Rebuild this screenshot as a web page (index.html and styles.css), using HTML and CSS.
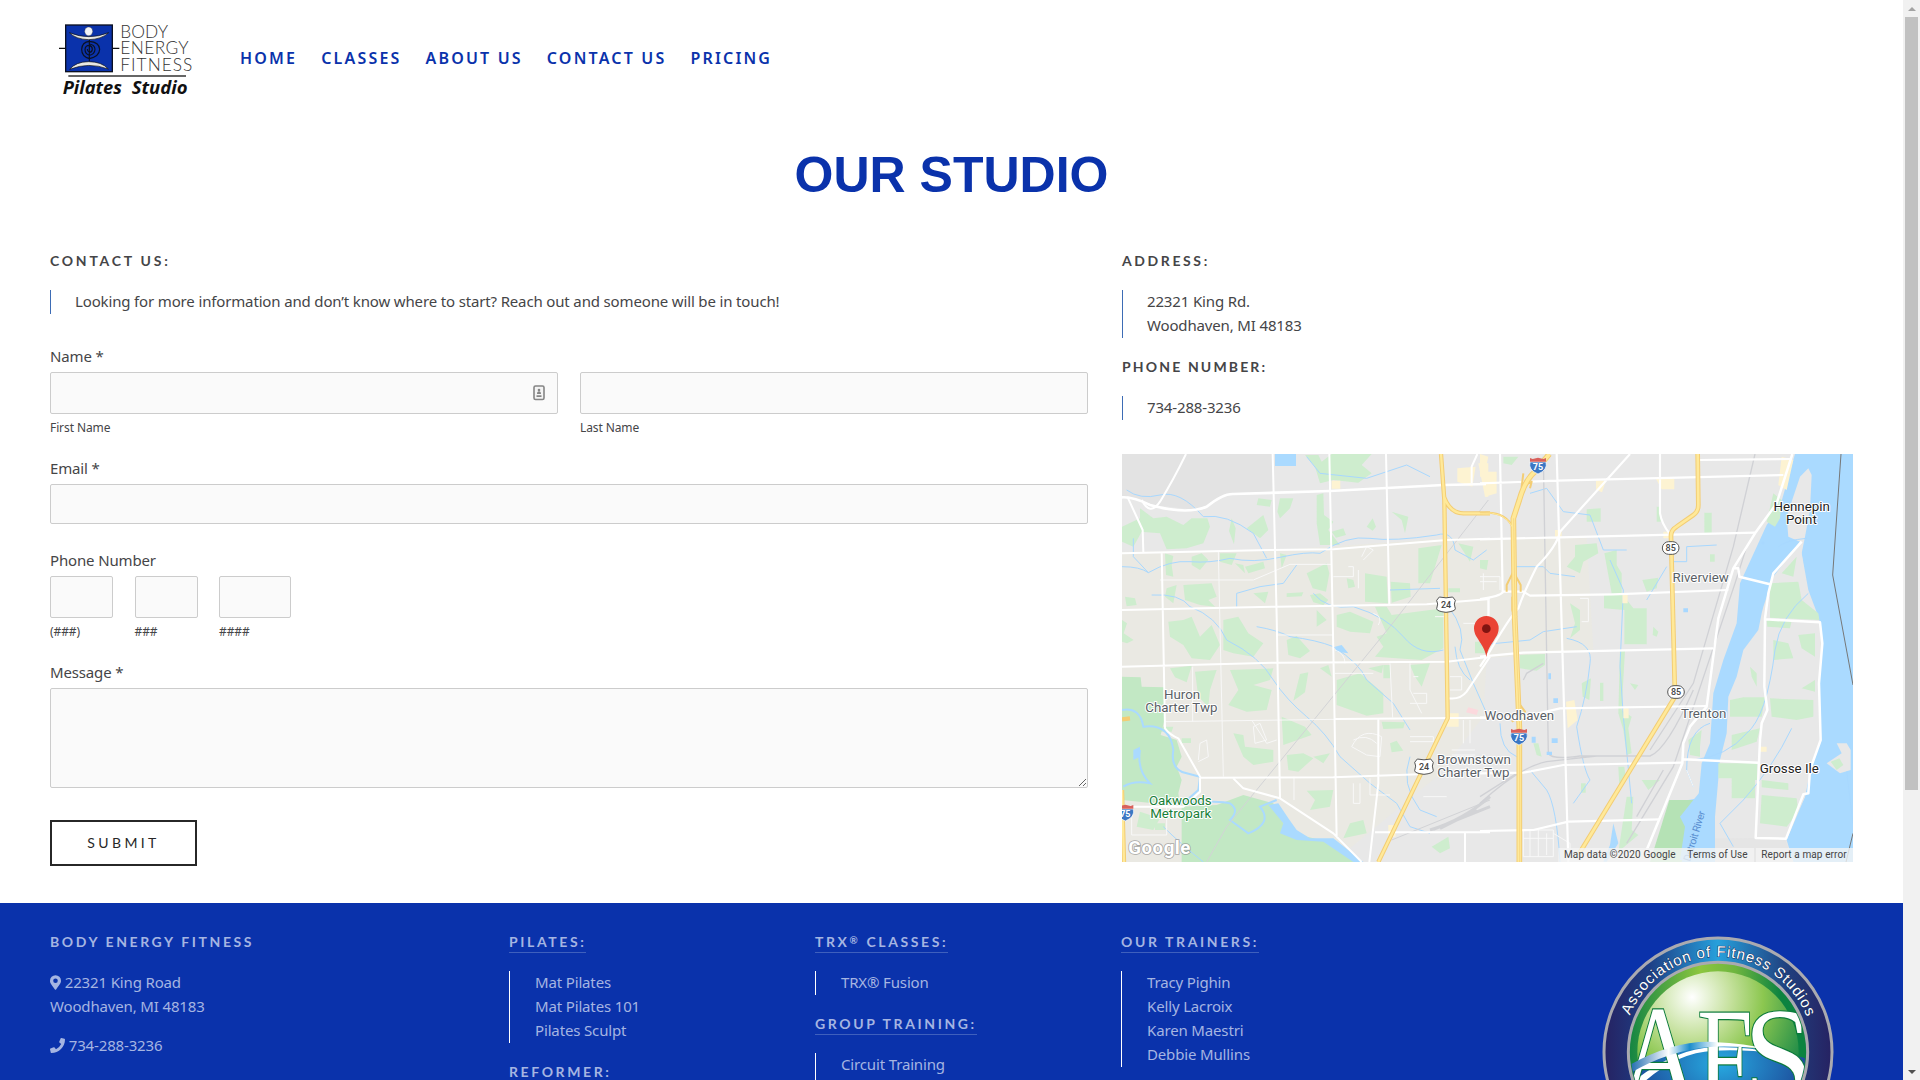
FILE: index.html
```html
<!DOCTYPE html>
<html lang="en">
<head>
<meta charset="utf-8">
<title>Our Studio</title>
<link rel="stylesheet" href="styles.css">
</head>
<body>
<div class="page">
  <header class="header">
    <svg class="logo" viewBox="0 0 540 300">
      <path d="M57 115H77M218 115H238" stroke="#111" stroke-width="4"/>
      <rect x="77" y="45" width="140" height="140" fill="#0a32ab" stroke="#0b1022" stroke-width="4"/>
      <ellipse cx="146" cy="64" rx="12" ry="13" fill="#f1f3f7" stroke="#222" stroke-width="1"/>
      <path d="M88 68Q146 92 206 68Q185 88 146 89Q108 88 88 68Z" fill="#e8e8e4" stroke="#111" stroke-width="2"/>
      <path d="M89 178Q108 155 146 155Q185 155 205 177Q146 155 89 178Z" fill="#e8e8e4" stroke="#111" stroke-width="2"/>
      <path d="M148 90V154M148 94Q178 96 179 118Q178 140 148 146Q125 140 125 118Q126 96 148 94M148 102Q164 104 165 118Q164 134 148 136Q135 132 135 118Q136 106 148 106Q157 108 157 118Q156 127 148 127Q142 124 142 117" fill="none" stroke="#0b1022" stroke-width="3.5"/>
      <g class="logo-name">
        <text x="241" y="83" textLength="143">BODY</text>
        <text x="241" y="133" textLength="205">ENERGY</text>
        <text x="241" y="184" textLength="216">FITNESS</text>
      </g>
      <path d="M85 198H438" stroke="#333" stroke-width="4"/>
      <text class="logo-sub" x="68" y="251" textLength="178" lengthAdjust="spacingAndGlyphs">Pilates</text>
      <text class="logo-sub" x="275" y="251" textLength="168" lengthAdjust="spacingAndGlyphs">Studio</text>
    </svg>
    <nav class="nav"><a>HOME</a><a>CLASSES</a><a>ABOUT US</a><a>CONTACT US</a><a>PRICING</a></nav>
  </header>

  <h1 class="title">OUR STUDIO</h1>

  <main class="main">
    <section class="contact">
      <h3>CONTACT US:</h3>
      <blockquote>Looking for more information and don’t know where to start? Reach out and someone will be in touch!</blockquote>
      <form class="form">
        <label>Name *</label>
        <div class="row">
          <div class="cell grow">
            <div class="input with-icon">
              <svg width="12" height="16" viewBox="0 0 12 16"><rect x="1" y="1" width="10" height="13.5" rx="1.5" fill="#f4f4f4" stroke="#858585" stroke-width="1.6"/><circle cx="6" cy="5" r="1.3" fill="#858585"/><path d="M4 9q0-2.800 2-2.800t2 2.800zM3.500 10.300h5v1.600h-5z" fill="#858585"/></svg>
            </div>
            <small>First Name</small>
          </div>
          <div class="cell grow"><div class="input"></div><small>Last Name</small></div>
        </div>
        <label class="after-caption">Email *</label>
        <div class="input short"></div>
        <label class="after-input">Phone Number</label>
        <div class="row phone">
          <div class="cell"><div class="input"></div><small>(###)</small></div>
          <div class="cell"><div class="input"></div><small>###</small></div>
          <div class="cell wide"><div class="input"></div><small>####</small></div>
        </div>
        <label class="after-caption">Message *</label>
        <textarea class="input area"></textarea>
        <button class="submit" type="button">SUBMIT</button>
      </form>
    </section>

    <section class="location">
      <h3>ADDRESS:</h3>
      <blockquote>22321 King Rd.<br>Woodhaven, MI 48183</blockquote>
      <h3 class="second">PHONE NUMBER:</h3>
      <blockquote>734-288-3236</blockquote>
      <div class="map">
        <svg viewBox="6 12 2193 1224" preserveAspectRatio="none">
          <rect x="6" y="12" width="2193" height="1224" fill="#e8e8e8"/>
          <path d="M6 305L480 300L980 265L1400 262L1420 600L1100 625L1090 800L950 980L640 1236H6Z" fill="#eae9e3"/>
          <path d="M6 12H460V125L330 130L230 180L100 165L6 140Z" fill="#e3e3e3"/>

          <g fill="#ceedce">
            <path d="M60 175L100 205L140 200L190 225L215 205L262 205L270 230L250 280L200 295L140 298L120 250L60 245Z"/>
            <path d="M6 230L60 205L68 240L40 290L6 275ZM415 145L455 150L450 170L410 165ZM480 145L520 145L510 175L480 205L472 185ZM590 135L610 130L612 195L640 215L625 240L660 285L600 285L590 220Z"/>
            <path d="M635 12H755L725 45L755 70L715 98L640 90L600 100L585 50L555 15H595L605 35ZM815 185L865 200L855 250L845 210ZM740 230l18-25 10 25-10 12zM635 245l35-10 8 20-30 8zM380 235l50-40 15 45-25 25zM335 205l12 30-5 48-15-40z"/>
            <path d="M135 310L160 318L155 345L160 380L138 375ZM215 320l30-10 20 20-25 30-25-15zM300 310h50l-15 35-35-10zM375 350l55-15 5 20-50 15zM345 340l25 5 5 25zM560 370l60-30 8 30-10 55-40-10zM480 310l20 5-15 40zM190 405L275 400L290 440L265 450L285 470L240 465L195 450ZM140 415l30-10-10 55-25-20zM400 430l45-5-10 35zM500 430l50-3-5 12-45 2zM15 440l30 5 5 20-30 4zM570 435l30-5 25 20-15 15-30-8z"/>
            <path d="M145 515L190 510L215 500L240 560L275 525L300 585L270 630L215 625L190 585L150 560ZM310 510L355 500L385 550L430 580L400 620L340 610L310 600ZM500 570l30-12 40 45-30 22-35-10zM6 510l15 10-10 30 30 20-20 10-15-5zM590 480l30 30-30 20z"/>
            <path d="M735 370L800 380L804 460L735 455ZM812 395L870 400L872 440L815 458ZM895 295L965 285L930 400L895 400ZM680 385l20 5 5 20-20 5zM765 470L800 470L815 495L970 475V595L905 630L765 620L790 590L770 560L800 550ZM650 495L690 485L760 515L750 550L690 545L650 530Z"/>
            <path d="M330 660L460 655L450 690L400 705L455 720L440 780L380 785L325 765L355 720ZM225 665L290 660L270 720L265 770L235 740ZM150 655l65-8-15 50-35-15zM540 672l25-5-10 60-35 25zM650 690L720 670L790 730V790L740 797L650 765ZM870 645l60-5-25 70-20-30zM600 655l25-10 10 35z"/>
            <path d="M485 800L555 830L575 855L490 885ZM340 850L370 855L375 890L460 900V935L400 945L370 920ZM500 915l50-5 30 15-45 40-30-5zM785 815l70 2-5 18-60 2zM560 1022l80-2-10 50-60 10 15-30zM690 1120l40-10 10 40-70 15zM935 1190l50-30 5 35-30 15zM790 645h20v40h-20zM580 920l50-10-20 30zM60 1085l60 20-20 35-50-10z"/>
            <path d="M105 1120h30v20h-30zM120 830h40l-5 15h-35zM185 865h28v14h-28zM810 880l20-8 20 30-35 5zM745 655l45-10-5 25zM1015 280l45 10-10 45zM985 415h35v12h-35zM1065 575h40v35h-40z"/>
          </g>
          <path d="M6 680L62 682L65 710L132 712V815L122 855L170 870L185 920L170 950L185 990L175 1030L180 1060H100L6 1050ZM185 1070L290 1065L370 1035L460 1060L490 1120L560 1160L650 1180L720 1236H185Z" fill="#c2e8c4"/>
          <path d="M465 12H528V48H465Z" fill="#aadaff"/>
          <g fill="none" stroke="#a8d8ff" stroke-width="3">
            <path d="M20 120Q60 150 120 135T250 200Q320 190 400 250L440 325M6 350Q60 350 85 368Q150 330 210 335T330 325Q400 340 480 322T600 310Q680 255 750 265T950 255Q1000 240 1005 300L1060 330L1100 300M95 435Q180 430 210 470Q290 500 320 570Q420 620 460 690Q500 750 560 800T660 920L750 1000L830 1060L870 1130L930 1150M410 530Q470 540 510 560Q590 570 640 590Q720 640 740 690L820 760L870 840M580 430Q620 480 700 470Q800 500 850 560Q900 620 970 600M560 20L600 70L740 85L860 45L930 80M985 470Q1040 540 1020 600L1060 700L1100 790M350 470V430L420 410L490 400L530 345"/>
            <path d="M130 1130Q180 1180 250 1236M40 265L40 320L85 368M810 420L960 415M870 920Q840 1000 900 1080L950 1100M1005 590Q1010 660 1050 690"/>
          </g>
          <path d="M6 780Q60 770 70 830Q150 820 160 900Q150 960 200 970L240 980M10 1010Q40 990 90 1000Q50 960 60 900M240 980L235 1020L190 1060Q300 1050 330 1060Q360 1080 330 1110L385 1150Q460 1120 420 1070L470 1050" fill="none" stroke="#aadaff" stroke-width="6"/>
          <path d="M445 1065L475 1060L505 1105L530 1140L570 1165L640 1165L730 1236H700L610 1175L530 1170L480 1150L490 1120ZM40 900l20-10 0 30-20 10zM645 590l20-5 20 25-35-5z" fill="#aadaff"/>
          <path d="M1105 150L810 530L320 1130L260 1236M815 1170L1110 1050" fill="none" stroke="#d2d3d6" stroke-width="3"/>
          <path d="M930 1140Q1030 1110 1110 1040M940 1138L1110 1070M960 1135L1070 1080" fill="none" stroke="#d2d3d6" stroke-width="9"/>
          <g fill="#fdf3d2"><path d="M635 92h26v24h-26zM1012 55l55-5-10 60-45-15zM1075 40h30v100h-10z"/><path d="M980 790h36v40h-36zM805 1125h22v35h-22z"/></g>
          <path d="M1045 772l30 8-5 15-32-8z" fill="#fbd9dd"/>

          <g fill="none" stroke="#f8f8f8" stroke-width="3">
            <path d="M120 390H400L510 343H635M295 305L310 980M470 555H636M218 650V815M810 640L818 803M135 815L645 808M645 670H760M522 980V1050M395 810L440 880L470 870M400 830l20-10 20 50-35 10zM235 930l5-50 20-10 5 50-30 15M640 380h60v-30h-15M715 415V360M730 330l30-30-20-10-15 30M945 500h40M1030 520h50v40M990 680h35v40h-35M870 640V720L905 790M880 680h15M870 760h50v-30h-40M695 890q30-60 90-30l-5 60-40-5zM700 870q40-20 70 10M645 600q30 10 30 40M700 1000v60h20v-60M750 985v50h60M870 860h70v15h-70M1030 810v70M1050 810v70M995 900h70M995 915h70M910 1040h70M35 1070v85H140V1070M760 490q30 10 15 35"/>
          </g>
          <g fill="none" stroke="#fff" stroke-width="6" stroke-linejoin="round">
            <path d="M458 12L470 500L480 1045M628 12L640 600L650 1165M798 12L808 463M6 310L450 300L640 298L980 270L1110 266M6 480L470 470L920 463L1110 447M6 650L470 638L980 635L1110 620M645 807L1110 803M240 983L640 982L900 973M125 305L135 835Q150 855 175 865L242 983M775 808V1000L748 1236M765 1147H1110M1035 1147V1236M340 985L370 1015L480 1045L640 1150L725 1236M22 140L68 240L70 305M198 12Q160 90 120 155Q90 200 65 150M1110 620L1040 725Q1020 750 985 745M1072 12L1055 50V100M10 1070H190L240 1025V983M1105 450V530"/>
            <path d="M6 142Q40 140 90 165Q200 195 260 170Q310 130 340 132L630 123L970 105L1110 102" stroke-width="8"/>
          </g>
          <g fill="none" stroke="#f3cd74" stroke-width="13">
            <path d="M963 12L973 150L983 805L775 1236M972 140Q990 190 1030 190L1110 190M6 1020L12 1236M6 808L30 805"/>
          </g>
          <path d="M963 12L973 150L983 805L775 1236M972 140Q990 190 1030 190L1110 190M6 1020L12 1236" fill="none" stroke="#ffe999" stroke-width="7"/>

          <g transform="translate(1080 0)">
            <path d="M945 12H1119V1236H940L920 1170L975 1040L1000 900L1020 850L1015 690L1028 580L1015 500L985 420L965 310L975 260L990 180L995 75L985 55L960 80L920 200L925 260L960 275L880 380L850 470L845 490L835 540L790 600L770 680L745 740L740 850L720 930L705 1100L695 1236H605L625 1050L655 1045L665 940L690 880L700 730L730 630L770 520L780 400L860 225L900 170Z" fill="#aadaff"/>
            <path d="M880 390L960 275L980 420L1020 515L1028 580L1018 700L1020 870L990 960L975 1040L915 1166L827 1164L835 830L860 780L855 470Z" fill="#e8e8e8"/>
            <path d="M750 1165L827 1164L915 1166L940 1236H700L705 1165Z" fill="#e5e5e5"/>
            <path d="M1040 940L1085 910L1070 880L1100 880L1112 900V960L1080 970Z" fill="#e8e8e8"/>
            <g fill="#ceedce">
              <path d="M320 178L362 175V215H320ZM285 285L350 280L355 310L310 335L300 370L260 350L285 320ZM373 310L410 300V345L425 370V430L460 475H500V583H433V480L372 475V435L395 430ZM487 390L535 383L530 415L500 425ZM673 188H695V248H673ZM690 313h14v22h-14zM120 615L195 612V645L170 662L120 655ZM270 460L300 480L300 540L270 565L285 520ZM880 130L905 150L900 205L885 230L860 215Z"/>
              <path d="M750 750L790 742H855L845 800H750ZM870 400L955 395L965 450L1015 490L1018 510L870 503ZM860 510L935 512L930 535L862 530ZM880 570L925 580L940 625L880 630ZM955 555l50-5 0 70-40-25zM870 745L1000 750V800L950 810L875 800ZM845 1035L950 1045L955 1085L920 1130L840 1120ZM845 990L925 1000V1020L845 1012ZM905 370l45-50-10 60zM965 715l40-25v35z"/>
              <path d="M420 600H435L425 780L455 800L445 835L455 910L440 915L430 840L415 790ZM415 950h18l5 40-20 20zM305 700l28-15-5 65-20-10zM755 855l85-20-10 40-75 25zM625 870l40-30-5 50 0 30-30-5zM715 940H832V990H825V1045H755V985H715ZM520 530l15 15-5 15-12-5zM160 880l15 0 10 40-15-5zM70 20l45 0-20 25-25-5zM303 1000h14v28h-14zM485 990l55 0-35 30zM440 1040l20 0-5 100 20 15-60 50zM810 650l20 20 0 40-15-30zM530 170h12v45h-12zM0 330l25 0-5 30-20-5zM360 698h10v55h-10zM450 700l25 5-10 15z"/>
            </g>
            <path d="M568 1050H655L640 1120L605 1236H510Z" fill="#b5e2b5"/>
            <path d="M1052 935L1078 925L1090 945L1070 960Z" fill="#ceedce"/>
            <path d="M600 1230L615 1130L600 1100L640 1050L665 1020L705 1030V1236ZM400 1120l15 60-35 55h-10l20-50z" fill="#aadaff"/>
            <g fill="none" stroke="#a8d8ff" stroke-width="3">
              <path d="M150 130L200 115L250 185L330 195L370 300L440 300M108 350H190L210 370L285 380M0 585L150 570L190 545L290 530M260 565Q340 580 330 640Q320 740 290 830Q310 960 330 990L280 1060M100 480V560M390 330L430 420L420 650L430 800L455 1060M560 350L500 450M575 335L620 335V290L710 285M985 430Q900 500 885 600Q860 800 800 850Q740 920 640 930M935 835Q880 950 790 1050L720 1120L760 1190M60 820Q60 900 110 920M150 960L200 1020Q230 1070 240 1236M690 820Q620 840 620 960L640 1010"/>
              <path d="M1100 965L1119 1120M980 265Q920 270 895 290"/>
            </g>
            <path d="M825 12L760 290L640 700L510 900M800 290L765 400L580 950L440 1180M190 20L205 910Q215 930 300 918L510 918Q560 900 640 720M0 1060Q120 950 200 935L350 918M190 640L140 670L130 690M550 960L470 1100M0 1040L110 970" fill="none" stroke="#d0d1d5" stroke-width="4"/>
            <g fill="#fdf3d2"><path d="M0 12L25 20L15 65H50V130L15 140L20 80H0ZM348 92h30l-12 35-18-8zM528 87H583V118H545ZM905 20l35 10-20 90-25-15zM427 430h16v30h-16zM258 755l25-5 10 60-30 25zM430 775h16v30h-16zM550 245h20v20h-20zM840 890h20v15h-20zM225 240h20v20h-20z"/></g>
            <g fill="#a8d8ff"><path d="M205 670h8v18h-8zM220 745h14v14h-14zM155 860h12v18h-12zM610 475h14v12h-14zM200 905h16v10h-16zM845 275h8v8h-8zM215 865h18v14h-18z"/></g>
            <g fill="none" stroke="#f8f8f8" stroke-width="3"><path d="M0 380h60v40M0 395h50M10 370v50M300 445h25v70h-20M130 1140h90v80h-90zM150 1140v80M175 1140v80M200 1150v65M130 1165h90M220 1150l50 30v30M28 445V520M620 960L640 1010"/></g>
            <g fill="none" stroke="#fff" stroke-width="6.500" stroke-linejoin="round">
              <path d="M0 100L230 92L910 75M655 30L930 27M230 12L250 700L265 1236M60 12L68 430M540 12V190Q545 220 568 250M0 268L240 262L825 248M0 447Q60 440 70 425H130L150 437L400 433L745 420M0 620L130 608L700 595M0 803H120L240 775L680 768M0 970L130 968L250 945L607 938M0 1143L160 1140L265 1115L540 1108M450 12L240 245Q230 290 170 350Q130 430 115 475Q90 500 20 620L0 650" />
              <path d="M937 12L890 160L825 250L760 355L715 505L680 770L630 830L610 880L607 940L500 1200M965 275L880 370L865 430L855 505L853 710L862 780L845 820L840 870L827 1164L918 1166L970 1033L985 1030L990 960L1022 870L1017 700L1027 580L1020 517L857 508M760 355H775L778 380L870 403M610 928L835 938" stroke-width="7.500"/>
            </g>
            <g fill="none" stroke="#f3cd74" stroke-width="17" stroke-linejoin="round">
              <path d="M208 12L165 65Q135 90 118 150L100 205L104 500L118 830V1236"/>
              <path d="M653 12L655 165Q655 185 640 195L590 230Q572 240 573 260L585 740L295 1215" stroke-width="14"/>
              <path d="M0 190Q75 180 100 235M80 425V405L100 365L122 405V425M97 440V480L105 510M110 750L135 785L120 800L95 815M130 70l-5 40 30-15-5 20" stroke-width="6"/>
            </g>
            <g fill="none" stroke="#ffe999" stroke-width="11" stroke-linejoin="round">
              <path d="M208 12L165 65Q135 90 118 150L100 205L104 500L118 830V1236"/>
              <path d="M653 12L655 165Q655 185 640 195L590 230Q572 240 573 260L585 740L295 1215" stroke-width="8"/>
              <path d="M0 190Q75 180 100 235" stroke-width="3"/>
            </g>
            <path d="M101 205L105 500L119 830V1236" stroke="#f3cd74" stroke-width="2" fill="none"/>
            <path d="M1083 12L1058 375L1119 705M1119 1150L1098 1236" fill="none" stroke="#777" stroke-width="3"/>
          </g>

          <g class="shields">
            <g id="us24"><path d="M958 441q20 5 40 0l8 10q-6 10 0 25 0 8-28 11-28-3-28-11 6-15 0-25z" fill="#fff" stroke="#555" stroke-width="3"/><text x="978" y="474">24</text></g>
            <use href="#us24" x="-66" y="486"/>
            <g id="m85" transform="translate(1652 294)"><rect x="-25" y="-19" width="50" height="38" rx="19" fill="#fff" stroke="#555" stroke-width="3"/><text x="0" y="10">85</text></g>
            <use href="#m85" x="16" y="432"/>
            <g id="i75"><path d="M1230 36h48q6 24-24 36-30-12-24-36z" fill="#3b77c4" stroke="#fff" stroke-width="2"/><path d="M1230 24l8 3 16-4 16 4 8-3v11h-48z" fill="#d9605b"/><text class="white" x="1254" y="60">75</text></g>
            <use href="#i75" x="-57" y="813"/>
            <use href="#i75" x="-1238" y="1041"/>
          </g>
          <g class="places">
            <text x="186" y="746">Huron</text><text x="184" y="785">Charter Twp</text>
            <text x="1198" y="809">Woodhaven</text>
            <text x="1062" y="941">Brownstown</text><text x="1060" y="980">Charter Twp</text>
            <text x="1742" y="395">Riverview</text><text x="1751" y="803">Trenton</text>
            <g class="park"><text x="181" y="1064">Oakwoods</text><text x="182" y="1103">Metropark</text></g>
            <g class="dark"><text x="2045" y="182">Hennepin</text><text x="2044" y="221">Point</text><text x="2008" y="968">Grosse Ile</text></g>
          </g>
          <text class="river" transform="translate(1710 1236) rotate(-73)" textLength="156">Detroit River</text>
          <path d="M1099 621C1095 596 1086 588 1074 567Q1062 552 1062 535A37 37 0 0 1 1136 535Q1136 552 1124 567C1112 588 1103 596 1099 621Z" fill="#ea4335"/>
          <circle cx="1099" cy="536" r="13" fill="#811411"/>
          <text class="google" x="25" y="1211" textLength="186">Google</text>
          <path d="M1315 1194H2199V1236H1315Z" fill="#f5f5f5" fill-opacity=".78"/>
          <path d="M1905 1194V1236" stroke="#ddd" stroke-width="3"/>
          <g class="credit"><text x="1332" y="1223" textLength="335">Map data ©2020 Google</text><text x="1702" y="1223" textLength="181">Terms of Use</text><text x="1924" y="1223" textLength="256">Report a map error</text></g>
        </svg>
      </div>
    </section>
  </main>

  <footer class="footer">
    <div class="col first">
      <h3>BODY ENERGY FITNESS</h3>
      <p><svg class="pin" viewBox="0 0 384 512"><path fill="currentColor" d="M172 502C27 291 0 270 0 192a192 192 0 1 1 384 0c0 78-27 99-172 310-10 13-30 13-40 0zm20-230a80 80 0 1 0 0-160 80 80 0 0 0 0 160z"/></svg> 22321 King Road<br>Woodhaven, MI 48183</p>
      <p class="tel"><svg class="handset" viewBox="0 0 512 512"><path fill="currentColor" d="M493 25L389 1c-11-3-23 3-27 14l-48 112c-4 10-1 21 7 28l61 50a371 371 0 0 1-177 177l-50-61c-7-8-18-11-28-7L15 362c-11 4-17 16-14 27l24 104c3 11 12 19 23 19 256 0 464-207 464-464 0-11-8-21-19-23z"/></svg> 734-288-3236</p>
    </div>
    <div class="col">
      <h3><u>PILATES:</u></h3>
      <blockquote>Mat Pilates<br>Mat Pilates 101<br>Pilates Sculpt</blockquote>
      <h3 class="next"><u>REFORMER:</u></h3>
    </div>
    <div class="col">
      <h3><u>TRX<span class="reg">®</span> CLASSES:</u></h3>
      <blockquote>TRX® Fusion</blockquote>
      <h3 class="next"><u>GROUP TRAINING:</u></h3>
      <blockquote>Circuit Training<br>&nbsp;</blockquote>
    </div>
    <div class="col">
      <h3><u>OUR TRAINERS:</u></h3>
      <blockquote>Tracy Pighin<br>Kelly Lacroix<br>Karen Maestri<br>Debbie Mullins</blockquote>
    </div>
    <svg class="badge" viewBox="60 45 708 708">
      <defs>
        <linearGradient id="ring" x1="0" x2="1"><stop offset="0" stop-color="#262262"/><stop offset=".2" stop-color="#1d3f86"/><stop offset=".5" stop-color="#27a0dc"/><stop offset=".8" stop-color="#20407f"/><stop offset="1" stop-color="#262262"/></linearGradient>
        <linearGradient id="green" x1="0" x2="1"><stop offset="0" stop-color="#128443"/><stop offset=".4" stop-color="#8cc63f"/><stop offset=".6" stop-color="#6db53f"/><stop offset=".85" stop-color="#0c8340"/></linearGradient>
        <radialGradient id="glow" cx=".34" cy=".16" r=".8"><stop offset="0" stop-color="#fff"/><stop offset=".3" stop-color="#c5e19d"/><stop offset=".55" stop-color="#8cc750"/><stop offset="1" stop-color="#0f8347"/></radialGradient>
        <radialGradient id="sea" cx=".5" cy=".15" r=".5"><stop offset="0" stop-color="#27aae1"/><stop offset="1" stop-color="#1c4595"/></radialGradient>
        <linearGradient id="arc" x1="0" x2="1"><stop offset="0" stop-color="#0a5da8"/><stop offset=".3" stop-color="#fff"/><stop offset=".45" stop-color="#1b8dcc"/><stop offset=".65" stop-color="#fff"/></linearGradient>
        <clipPath id="inner"><circle cx="414" cy="396" r="262"/></clipPath>
        <path id="curve" d="M128 396A286 286 0 0 1 700 396"/>
      </defs>
      <circle cx="414" cy="396" r="342" fill="url(#ring)" stroke="#aaaab0" stroke-width="9"/>
      <circle cx="414" cy="396" r="269" fill="url(#green)" stroke="#aaaab0" stroke-width="9"/>
      <g clip-path="url(#inner)">
        <circle cx="414" cy="396" r="242" fill="url(#glow)"/>
        <path d="M140 450Q280 370 400 374Q520 376 700 420V753H140Z" fill="url(#sea)"/>
        <path d="M140 500Q280 385 400 382Q500 378 590 400Q500 388 400 392Q260 400 140 540Z" fill="#fff"/>
        <text class="afs" x="118" y="540" font-size="410" textLength="238" lengthAdjust="spacingAndGlyphs">A</text>
        <text class="afs" x="352" y="560" font-size="430" textLength="166" lengthAdjust="spacingAndGlyphs">F</text>
        <text class="afs" x="492" y="548" font-size="415" textLength="208" lengthAdjust="spacingAndGlyphs">S</text>
        <path d="M140 440Q280 360 400 366Q500 370 560 388Q500 378 400 380Q260 390 140 466Z" fill="url(#arc)"/>
      </g>
      <text class="around"><textPath href="#curve" startOffset="112" textLength="678">Association of Fitness Studios</textPath></text>
    </svg>
  </footer>
</div>
<div class="scrollbar"><i class="up"></i><div class="thumb"></div><i class="down"></i></div>
</body>
</html>
```
FILE: styles.css
```css
* { box-sizing: border-box; }
body {
  margin: 0;
  height: 1080px;
  overflow: hidden;
  display: flex;
  background: #fff;
  color: #454547;
  font: 15px/24px "Noto Sans", "Open Sans", sans-serif;
  letter-spacing: -0.15px;
}
.page { width: 1903px; height: 1080px; overflow: hidden; flex: none; }
.header { height: 120px; display: flex; padding: 10px 0 0 40px; }
.logo { width: 180px; height: 100px; }
.logo-name { font: 300 52px Lato, sans-serif; fill: #333; letter-spacing: 0; }
.logo-sub { font: italic 700 53px "Open Sans", sans-serif; fill: #111; letter-spacing: 0; }
.nav { display: flex; gap: 24px; padding: 36px 0 0 20px; font-size: 16px; font-weight: 600; color: #0a32ab; letter-spacing: 2.18px; }
.title {
  margin: 0;
  height: 131px;
  padding-top: 25px;
  text-align: center;
  font: bold 50px/60px "Liberation Sans", Arial, sans-serif;
  letter-spacing: 0;
  color: #0a32ab;
}
.main { height: 652px; padding: 0 50px; display: grid; grid-template-columns: 1038px 731px; column-gap: 34px; }
h3 { margin: 0 0 19px; font: bold 14px/20px Lato, sans-serif; letter-spacing: 2.6px; }
blockquote { display: flow-root; margin: 0; padding: 0 0 1px 24px; border-left: 1px solid #3d6cb5; line-height: 24px; }
blockquote::before { content: ""; display: block; margin-top: -1px; }
.contact h3 { letter-spacing: 2.75px; }
.form { margin-top: 30px; display: flex; flex-direction: column; align-items: stretch; }
label { margin-bottom: 4px; }
.after-caption { margin-top: 20px; }
.after-input { margin-top: 24px; }
.row { display: flex; gap: 22px; }
.grow { flex: 1; }
.phone .cell { width: 63px; }
.phone .wide { width: 72px; }
.phone { gap: 21.500px; }
.input { height: 42px; background: #fafafa; border: 1px solid #ccc; border-radius: 2px; }
.short { height: 40px; }
.with-icon { display: flex; justify-content: flex-end; align-items: center; padding-right: 12px; }
small { display: block; margin-top: 6px; font-size: 12px; line-height: 16px; letter-spacing: -0.1px; }
.area { height: 100px; width: 100%; display: block; }
.submit { align-self: flex-start; margin-top: 32px; width: 147px; height: 46px; padding: 0; border: 2px solid #272727; background: #fff; color: #272727; font: 14px/20px Lato, sans-serif; letter-spacing: 3.4px; }
.second { margin-top: 19px; }
h3.second { letter-spacing: 2.15px; }
.map { margin-top: 34px; height: 408px; }
.map svg { display: block; width: 731px; height: 408px; }
.map text { letter-spacing: 0; font-family: Roboto, sans-serif; }
.shields { font-size: 27px; font-weight: 500; text-anchor: middle; fill: #444; }
.white { fill: #fff; font-weight: bold; }
.places { font-size: 40px; text-anchor: middle; fill: #5a5f66; stroke: #fff; stroke-width: 6px; paint-order: stroke; stroke-linejoin: round; }
.park { fill: #188038; }
.dark { fill: #222; }
.river { font-size: 31px; fill: #5a8fd0; }
.google { font-size: 56px; font-weight: 700; fill: #fff; stroke: #8a8a8a; stroke-opacity: .7; stroke-width: 5px; paint-order: stroke; }
.credit { font-size: 30px; fill: #444; }
.footer { height: 177px; padding: 29px 0 0 50px; display: flex; align-items: flex-start; background: #0a32ab; color: #a5b5e2; overflow: hidden; }
.col { width: 306px; flex: none; }
.first { width: 459px; }
.footer blockquote { padding-left: 25px; border-color: #fff; }
.footer u { display: inline-block; height: 21px; text-decoration: none; border-bottom: 1px solid #3f60bd; }
.footer h3 { height: 20px; }
.footer .next { margin-top: 19px; }
.reg { font-size: 10px; vertical-align: 3px; line-height: 1px; }
p { margin: -1px 0 0; }
.tel { margin-top: 15px; }
.pin { width: 11px; height: 15px; vertical-align: -2px; }
.handset { width: 15px; height: 15px; vertical-align: -2px; }
.badge { width: 236px; height: 236px; margin: 3px 0 0 173px; flex: none; }
.afs { font-family: "Liberation Serif", serif; fill: #fff; stroke: #0b7a3a; stroke-width: 7px; paint-order: stroke; letter-spacing: 0; }
.around { font: 45px "Liberation Sans", sans-serif; fill: #fff; stroke: #1b3260; stroke-width: 3px; paint-order: stroke; letter-spacing: 0; }
.scrollbar { width: 17px; flex: none; background: #f1f1f1; display: flex; flex-direction: column; align-items: center; }
.thumb { width: 13px; height: 773px; background: #c1c1c1; }
.up { width: 0; height: 0; margin: 7px 0 6px; border: 4px solid transparent; border-top: 0; border-bottom-color: #a3a3a3; }
.down { width: 0; height: 0; margin: auto 0 6px; border: 4px solid transparent; border-top-color: #505050; border-bottom: 0; }
```
